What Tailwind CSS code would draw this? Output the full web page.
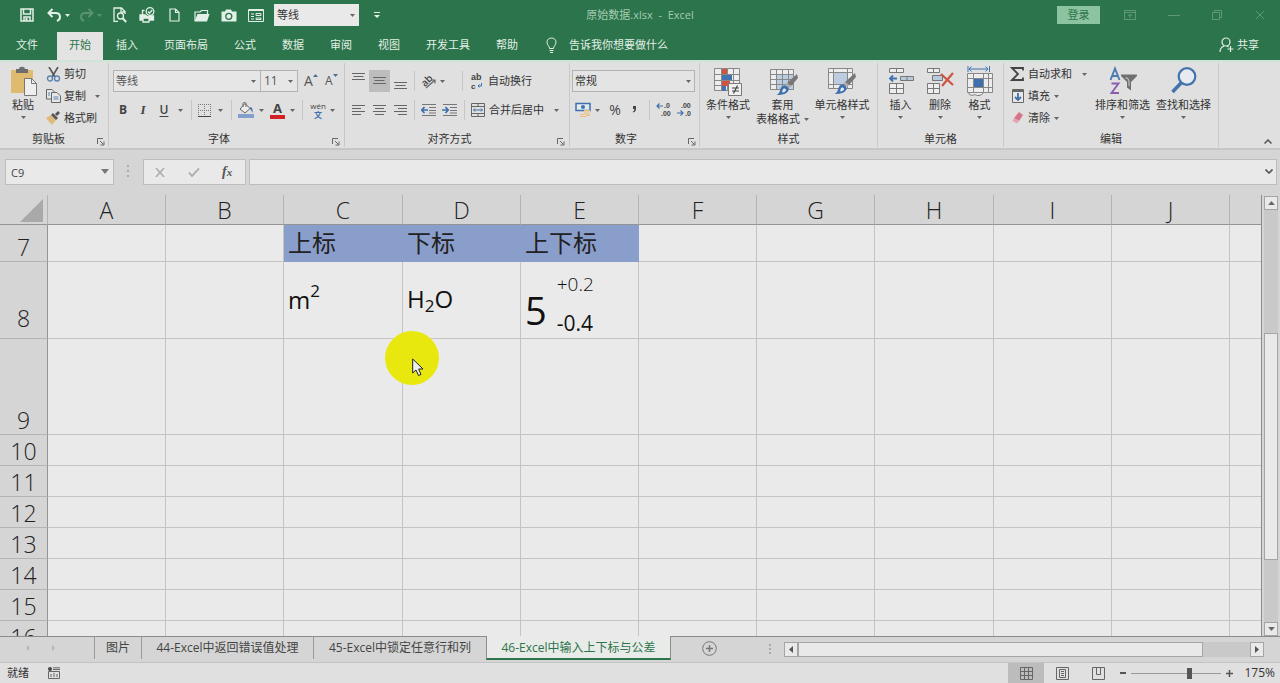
<!DOCTYPE html>
<html lang="zh-CN">
<head>
<meta charset="utf-8">
<meta name="viewport" content="width=device-width, initial-scale=1">
<title>原始数据.xlsx - Excel</title>
<script src="https://cdn.jsdelivr.net/npm/@tailwindcss/browser@4"></script>
</head>
<body class="h-screen overflow-hidden flex flex-col bg-[#d5d5d5] text-[#333] text-[11px] leading-[14px] font-['Open_Sans','Noto_Sans_CJK_SC',sans-serif]">

<!-- Shared symbols -->
<svg class="hidden" aria-hidden="true">
  <symbol id="caret" viewBox="0 0 5 3"><path d="M0 0h5L2.500 3z" fill="currentColor"/></symbol>
  <symbol id="launch" viewBox="0 0 8 8"><path d="M.5 6V.5H6M3 3l3.500 3.500M7 3.500V7H3.500" fill="none" stroke="#666"/></symbol>
  <symbol id="brush" viewBox="0 0 22 22"><path d="M21 0l1 4-7 8-4-3z" fill="#777"/><path d="M11 9l4 3-2 2-4-3z" fill="#aaa"/><path d="M8.500 11.500c2 0 4.500 2 4 4.500-.5 3-5 5-12 5 3-1.500 3-3 4-6 .6-2 2-3.500 4-3.500z" fill="#3e70ad"/><path d="M7 15c1-1 3-.5 3 1s-2 2.500-4 2.500z" fill="#e4ebf3"/></symbol>
</svg>

<!-- Title bar -->
<header class="shrink-0 bg-[#2c744b] text-[#e3f0e7]">
  <div class="h-[30px] grid grid-cols-[1fr_auto_1fr] items-center">
    <div class="flex items-center pl-5">
      <button aria-label="保存" class="w-[14px]"><svg class="w-[14px] h-[14px]" viewBox="0 0 14 14" fill="none" stroke="currentColor" stroke-width="1.500"><path d="M1 1h12v12H1zM3.500 1v5h7V1M4 13V9h6v4"/><path d="M5.500 10h2v3h-2z" fill="currentColor" stroke="none"/></svg></button>
      <button aria-label="撤消" class="ml-[13px] w-[15px]"><svg class="w-[15px] h-[14px]" viewBox="0 0 15 14" fill="none" stroke="currentColor" stroke-width="2"><path d="M5.500 1L1.500 5l4 4M2 5h6.500c3 0 4.500 1.500 4.500 4 0 2-1.200 3.300-3 4"/></svg></button>
      <svg class="ml-[3px] w-[5px] h-[3px]"><use href="#caret"/></svg>
      <button aria-label="恢复" disabled class="ml-[9px] w-[15px] opacity-25"><svg class="w-[15px] h-[14px]" viewBox="0 0 15 14" fill="none" stroke="currentColor" stroke-width="2"><path d="M9.500 1l4 4-4 4M13 5H6.500C3.500 5 2 6.500 2 9c0 2 1.200 3.300 3 4"/></svg></button>
      <svg class="ml-[3px] w-[5px] h-[3px] opacity-25"><use href="#caret"/></svg>
      <button aria-label="打印预览" class="ml-[11px] w-[14px]"><svg class="w-[14px] h-[16px]" viewBox="0 0 14 16" fill="none" stroke="currentColor" stroke-width="1.300"><path d="M5 14.300H1V1h7.500L12 4.500V7M8 1v4h4"/><circle cx="7.500" cy="9" r="3"/><path d="M9.700 11.300l3.500 3.700" stroke-width="2"/></svg></button>
      <button aria-label="快速打印" class="ml-3 w-4"><svg class="w-4 h-[16px]" viewBox="0 0 16 16" fill="none" stroke="currentColor" stroke-width="1.300"><path d="M5.500 3.500H3.500V8"/><path d="M1 8h5l3 2 4-1h1.500v4H1z" fill="currentColor"/><path d="M4 11h6v4H4z" fill="#2c744b"/><circle cx="11" cy="4.500" r="3.800"/><path d="M9 4.500l1.500 1.700L13.200 3"/></svg></button>
      <button aria-label="新建" class="ml-[14px] w-[11px]"><svg class="w-[11px] h-[14px]" viewBox="0 0 11 14" fill="none" stroke="currentColor" stroke-width="1.200"><path d="M1 1h5.500L10 4.500V13H1zM6.500 1v3.500H10"/></svg></button>
      <button aria-label="打开" class="ml-[14px] w-4"><svg class="w-4 h-[13px]" viewBox="0 0 16 13"><path d="M1 12V3h5l1.500-1.500h6V5" fill="none" stroke="currentColor" stroke-width="1.200"/><path d="M3.500 5H15.500L13 12.500H.5z" fill="currentColor"/></svg></button>
      <button aria-label="照相机" class="ml-[11px] w-4"><svg class="w-4 h-[13px]" viewBox="0 0 16 13"><path d="M.5 2.500H4L5 .5h5l1 2h4.500v10H.5z" fill="currentColor"/><circle cx="7.800" cy="7.300" r="3" fill="none" stroke="#2c744b" stroke-width="1.300"/></svg></button>
      <button aria-label="窗体" class="ml-[11px] w-4"><svg class="w-4 h-[13px]" viewBox="0 0 16 13" fill="none" stroke="currentColor"><path d="M.5.5h15v12H.5zM.5 1.500h15M3 5h3M3 7.500h3M3 10h3"/><path d="M8 4.500h5v2H8zM8 9h5v1.500H8z"/></svg></button>
      <div class="relative ml-[10px] w-[85px]">
        <select aria-label="快速字体" class="block appearance-none w-full h-[22px] bg-[#e9e9e9] text-[#333] pl-[3px]"><option>等线</option></select>
        <svg class="absolute right-1 top-[10px] w-[5px] h-[3px] text-[#666] pointer-events-none"><use href="#caret"/></svg>
      </div>
      <button aria-label="自定义快速访问工具栏" class="ml-[15px]"><svg class="w-[6px] h-[7px]" viewBox="0 0 6 7" fill="currentColor"><path d="M0 0h6v1H0zM0 3h6L3 6z"/></svg></button>
    </div>
    <h1 class="text-[#a5ccb3]">原始数据.xlsx&nbsp; -&nbsp; Excel</h1>
    <div class="flex items-center justify-end pr-[15px] text-[#5f9877]">
      <button class="w-[43px] h-[18px] bg-[#8cc3a0] text-[#2c744b]">登录</button>
      <button aria-label="功能区显示选项" class="ml-6"><svg class="w-3 h-[10px]" viewBox="0 0 12 10" fill="none" stroke="currentColor"><path d="M.5.5h11v9H.5zM.5 2.500h11M6 8V4M4 6l2-2 2 2"/></svg></button>
      <button aria-label="最小化" class="ml-[32px]"><svg class="w-3 h-[10px]" viewBox="0 0 12 10" stroke="currentColor"><path d="M0 5.500h12"/></svg></button>
      <button aria-label="还原" class="ml-[32px]"><svg class="w-[10px] h-[10px]" viewBox="0 0 10 10" fill="none" stroke="currentColor"><path d="M.5 2.500h7v7h-7zM2.500 2.500v-2h7v7h-2"/></svg></button>
      <button aria-label="关闭" class="ml-[33px]"><svg class="w-[10px] h-[10px]" viewBox="0 0 10 10" stroke="currentColor"><path d="M1 1l8 8M9 1L1 9"/></svg></button>
    </div>
  </div>
  <nav class="h-[30px] flex items-end">
    <button class="w-[57px] h-7 pr-[3px] pb-[3px]">文件</button>
    <button class="w-[46px] h-7 pb-[3px] bg-[#e3e3e3] text-[#2c744b]">开始</button>
    <button class="px-[13px] h-7 pb-[3px]">插入</button>
    <button class="px-[13px] h-7 pb-[3px]">页面布局</button>
    <button class="px-[13px] h-7 pb-[3px]">公式</button>
    <button class="px-[13px] h-7 pb-[3px]">数据</button>
    <button class="px-[13px] h-7 pb-[3px]">审阅</button>
    <button class="px-[13px] h-7 pb-[3px]">视图</button>
    <button class="px-[13px] h-7 pb-[3px]">开发工具</button>
    <button class="px-[13px] h-7 pb-[3px]">帮助</button>
    <button class="ml-[15px] h-7 pb-[3px] flex items-center gap-3"><svg class="w-[11px] h-[16px]" viewBox="0 0 11 16" fill="none" stroke="currentColor"><path d="M3.500 11.500c0-2.500-2.500-3.500-2.500-6.200C1 2.600 3 1 5.500 1S10 2.600 10 5.300c0 2.700-2.500 3.700-2.500 6.200zM3.500 13.500h4M4 15.500h3"/></svg>告诉我你想要做什么</button>
    <button class="ml-auto mr-[21px] h-7 pb-[3px] flex items-center gap-[3px]"><svg class="w-[15px] h-4" viewBox="0 0 15 16" fill="none" stroke="currentColor" stroke-width="1.200"><circle cx="7" cy="5" r="4"/><path d="M1 15c0-3 1.500-5 4-6M8 8.800l1.500 1.200M11.500 9v6M8.500 12h6"/></svg>共享</button>
  </nav>
</header>

<!-- Ribbon -->
<section aria-label="功能区" class="shrink-0 flex h-[90px] bg-[#e0e0e0] border-t-2 border-t-[#cfe3d7] border-b-2 border-b-[#c6c6c6]">

  <div class="w-[109px] flex flex-col border-r border-[#c8c8c8] my-px">
    <div class="flex h-[67px]">
      <button class="w-[46px] pt-[3px] flex flex-col items-center">
        <svg class="w-7 h-8" viewBox="0 0 28 32"><path d="M2 4h22v23H2z" fill="#dfbb6f"/><path d="M7 7V3h3c0-3 6-3 6 0h3v4z" fill="#6d6d6d"/><path d="M15.500 12.500h7l5 5v12h-12z" fill="#eee" stroke="#777"/><path d="M22.500 12.500v5h5" fill="none" stroke="#777"/></svg>
        粘贴
        <svg class="mt-1 w-[5px] h-[3px] text-[#666]"><use href="#caret"/></svg>
      </button>
      <div class="flex flex-col">
        <button class="h-[22px] flex items-center gap-[3px]"><svg class="w-[15px] h-[15px]" viewBox="0 0 15 15" fill="none"><path d="M3 0l6 10M12 0L6 10" stroke="#555" stroke-width="1.600"/><circle cx="4" cy="11.500" r="2.500" stroke="#5d86b5" stroke-width="1.400"/><circle cx="11" cy="11.500" r="2.500" stroke="#5d86b5" stroke-width="1.400"/></svg>剪切</button>
        <button class="h-[22px] flex items-center gap-[3px]"><svg class="w-[15px] h-[14px]" viewBox="0 0 15 14" fill="#e6e6e6" stroke="#666"><path d="M.5.5H6L8.500 3v7H.5z"/><path d="M5.500 3.500H11L14.500 7v6.500h-9z"/><path d="M2 4h2M2 6h2M7.500 8h5M7.500 10h5" stroke="#5d86b5"/></svg>复制<svg class="ml-[6px] w-[5px] h-[3px] text-[#666]"><use href="#caret"/></svg></button>
        <button class="h-[22px] flex items-center gap-[3px]"><svg class="w-[15px] h-[14px]" viewBox="0 0 15 14"><path d="M0 7l5-3 5 5-4 5z" fill="#dfbb7a"/><path d="M5 4l2-2 5 5-2 2z" fill="#555"/><path d="M9 3l3-3 2 2-3 3z" fill="#555"/></svg>格式刷</button>
      </div>
    </div>
    <div class="flex items-center h-[17px] pr-[3px]"><span class="flex-1 text-center">剪贴板</span><button aria-label="剪贴板设置" class="self-end"><svg class="w-2 h-2 mb-px"><use href="#launch"/></svg></button></div>
  </div>

  <div class="w-[236px] flex flex-col border-r border-[#c8c8c8] my-px">
    <div class="h-[67px] pt-[7px] pl-1 flex flex-col gap-[7px]">
      <div class="flex h-[22px]">
        <div class="relative w-[148px]"><select aria-label="字体" class="appearance-none w-full h-full pl-[2px] bg-[#e6e6e6] border border-[#b2b2b2] text-[#555]"><option>等线</option></select><svg class="absolute right-[5px] top-[10px] w-[5px] h-[3px] text-[#666] pointer-events-none"><use href="#caret"/></svg></div>
        <div class="relative w-[38px] -ml-px"><select aria-label="字号" class="appearance-none w-full h-full pl-[3px] bg-[#e6e6e6] border border-[#b2b2b2] text-[#555] text-[12px]"><option>11</option></select><svg class="absolute right-[5px] top-[10px] w-[5px] h-[3px] text-[#666] pointer-events-none"><use href="#caret"/></svg></div>
        <button aria-label="增大字号" class="ml-[6px] w-[15px] flex items-center text-[14px] text-[#555]">A<svg class="w-[5px] h-[3px] mb-3 rotate-180 text-[#4a6d96]"><use href="#caret"/></svg></button>
        <button aria-label="减小字号" class="ml-[6px] w-[15px] flex items-center text-[12px] text-[#555]">A<svg class="w-[5px] h-[3px] mb-3 text-[#4a6d96]"><use href="#caret"/></svg></button>
      </div>
      <div class="flex items-center h-[22px] text-[12px] text-[#444]">
        <button class="w-5 font-bold">B</button>
        <button class="w-5 italic font-bold font-['Liberation_Serif',serif] text-[13px]">I</button>
        <button class="w-[22px] font-semibold underline underline-offset-2">U</button>
        <svg class="ml-[3px] w-[5px] h-[3px] text-[#666]"><use href="#caret"/></svg>
        <span class="ml-2 w-px h-5 bg-[#c6c6c6]"></span>
        <button aria-label="边框" class="ml-[6px]"><svg class="w-[13px] h-[13px]" viewBox="0 0 13 13" fill="none" stroke="#777" stroke-dasharray="1 1"><path d="M.5 0v13M6.500 0v13M12.500 0v13M0 .5h13M0 6.500h13"/><path d="M0 12.500h13" stroke="#444" stroke-dasharray="none"/></svg></button>
        <svg class="ml-[7px] w-[5px] h-[3px] text-[#666]"><use href="#caret"/></svg>
        <span class="ml-2 w-px h-5 bg-[#c6c6c6]"></span>
        <button aria-label="填充颜色" class="ml-[6px]"><svg class="w-4 h-4" viewBox="0 0 16 16"><path d="M0 12h16v4H0z" fill="#849fce"/><path d="M7 1.500l5 5L7 11 2 7z" fill="#ececec" stroke="#666"/><path d="M5 5V1.500C5 0 8 0 8 1.500V5" fill="none" stroke="#666"/><path d="M12 5c2 0 3 2 2.500 6-1-2-1-3-2.500-4z" fill="#3e70ad"/></svg></button>
        <svg class="ml-[5px] w-[5px] h-[3px] text-[#666]"><use href="#caret"/></svg>
        <button aria-label="字体颜色" class="ml-[6px] w-[15px] h-[17px] border-b-[4px] border-[#d31f26] font-bold text-[13px] leading-[13px]">A</button>
        <svg class="ml-[5px] w-[5px] h-[3px] text-[#666]"><use href="#caret"/></svg>
        <span class="ml-[7px] w-px h-5 bg-[#c6c6c6]"></span>
        <button aria-label="拼音指南" class="ml-[7px] w-4 flex flex-col items-center"><span class="text-[8px] leading-[8px]">wén</span><span class="text-[8px] leading-[9px] font-bold text-[#3e70ad]">文</span></button>
        <svg class="ml-1 w-[5px] h-[3px] text-[#666]"><use href="#caret"/></svg>
      </div>
    </div>
    <div class="flex items-center h-[17px] pr-1"><span class="flex-1 text-center pr-[3px]">字体</span><button aria-label="字体设置" class="self-end"><svg class="w-2 h-2 mb-px"><use href="#launch"/></svg></button></div>
  </div>

  <div class="w-[225px] flex flex-col border-r border-[#c8c8c8] my-px">
    <div class="h-[67px] pt-[7px] pl-[3px] flex flex-col gap-[7px]">
      <div class="flex items-center h-[22px]">
        <button aria-label="顶端对齐" class="w-[21px] h-full flex justify-center pt-[3px]"><svg class="w-[13px] h-[8px]" stroke="#666"><path d="M0 .5h13M1.500 3.500h10M0 6.500h13"/></svg></button>
        <button aria-label="垂直居中" class="w-[21px] h-full flex justify-center items-center bg-[#bdbdbd]"><svg class="w-[13px] h-[8px]" stroke="#666"><path d="M0 .5h13M1.500 3.500h10M0 6.500h13"/></svg></button>
        <button aria-label="底端对齐" class="w-[21px] h-full flex justify-center items-end pb-[2px]"><svg class="w-[13px] h-[8px]" stroke="#666"><path d="M0 .5h13M1.500 3.500h10M0 6.500h13"/></svg></button>
        <span class="ml-[3px] w-px h-5 bg-[#c6c6c6]"></span>
        <button aria-label="方向" class="ml-[6px]"><svg class="w-4 h-4 overflow-visible" viewBox="0 0 16 16"><text x="0" y="11" transform="rotate(-45 6 8)" font-size="10" font-weight="600" fill="#444">ab</text><path d="M5 15l9-8M10.500 7H14v3.500" fill="none" stroke="#666" stroke-width="1.200"/></svg></button>
        <svg class="ml-[3px] w-[5px] h-[3px] text-[#666]"><use href="#caret"/></svg>
        <span class="ml-[17px] w-px h-5 bg-[#c6c6c6]"></span>
        <button class="ml-[7px] flex items-center gap-1"><svg class="w-[14px] h-4 overflow-visible" viewBox="0 0 14 16" font-family="Liberation Sans" font-size="9" font-weight="700" fill="#444"><text x="1" y="7">ab</text><text x="1" y="16" font-size="8">c</text><path d="M11.500 10v3H8M9.500 11.500L8 13l1.500 1.500" fill="none" stroke="#3e70ad"/></svg>自动换行</button>
      </div>
      <div class="flex items-center h-[22px]">
        <button aria-label="左对齐" class="w-[21px] flex justify-center"><svg class="w-[13px] h-[10px]" stroke="#666"><path d="M0 .5h13M0 3.500h9M0 6.500h13M0 9.500h9"/></svg></button>
        <button aria-label="居中" class="w-[21px] flex justify-center"><svg class="w-[13px] h-[10px]" stroke="#666"><path d="M0 .5h13M2 3.500h9M0 6.500h13M2 9.500h9"/></svg></button>
        <button aria-label="右对齐" class="w-[21px] flex justify-center"><svg class="w-[13px] h-[10px]" stroke="#666"><path d="M0 .5h13M4 3.500h9M0 6.500h13M4 9.500h9"/></svg></button>
        <span class="ml-[3px] w-px h-5 bg-[#c6c6c6]"></span>
        <button aria-label="减少缩进量" class="ml-[6px]"><svg class="w-[15px] h-3" viewBox="0 0 15 12"><path d="M1 .5h14M8 3.500h7M8 6.500h7M8 9h7M1 11.500h14" stroke="#777"/><path d="M7 6H1M3.500 3L.8 6l2.700 3" stroke="#3e70ad" stroke-width="1.700" fill="none"/></svg></button>
        <button aria-label="增加缩进量" class="ml-[6px]"><svg class="w-[15px] h-3" viewBox="0 0 15 12"><path d="M1 .5h14M8 3.500h7M8 6.500h7M8 9h7M1 11.500h14" stroke="#777"/><path d="M0 6h6M3.500 3l2.700 3-2.700 3" stroke="#3e70ad" stroke-width="1.700" fill="none"/></svg></button>
        <span class="ml-[7px] w-px h-5 bg-[#c6c6c6]"></span>
        <button class="ml-[6px] flex items-center gap-1"><svg class="w-[14px] h-[14px]" viewBox="0 0 14 14" fill="none" stroke="#666"><path d="M.5.5h13v13H.5zM.5 3.500h13M.5 10.500h13M7 .5v3M7 10.500v3"/><path d="M2.500 7h9M4 5.500L2.500 7 4 8.500M10 5.500L11.500 7 10 8.500" stroke="#3e70ad"/></svg>合并后居中<svg class="ml-[6px] w-[5px] h-[3px] text-[#666]"><use href="#caret"/></svg></button>
      </div>
    </div>
    <div class="flex items-center h-[17px] pr-1"><span class="flex-1 text-center pr-[3px]">对齐方式</span><button aria-label="对齐设置" class="self-end"><svg class="w-2 h-2 mb-px"><use href="#launch"/></svg></button></div>
  </div>

  <div class="w-[130px] flex flex-col border-r border-[#c8c8c8] my-px">
    <div class="h-[67px] pt-[7px] pl-[2px] flex flex-col gap-[7px]">
      <div class="relative w-[123px] h-[22px]"><select aria-label="数字格式" class="appearance-none w-full h-full pl-[2px] bg-[#e4e4e4] border border-[#b2b2b2]"><option>常规</option></select><svg class="absolute right-1 top-[10px] w-[5px] h-[3px] text-[#666] pointer-events-none"><use href="#caret"/></svg></div>
      <div class="flex items-center h-[22px] text-[#444]">
        <button aria-label="会计数字格式" class="ml-[3px]"><svg class="w-4 h-4" viewBox="0 0 16 16"><path d="M1 1.500h14v7H1z" fill="#e3eaf2" stroke="#3e70ad" stroke-width="1.500"/><circle cx="8" cy="5" r="2" fill="#3e70ad"/><path d="M9 8h6v6H9zM5 12h6v3H5z" fill="#e5bd83"/><path d="M9 10h6M9 12h6M5 13.500h6" stroke="#e9e1d4"/></svg></button>
        <svg class="ml-1 w-[5px] h-[3px] text-[#666]"><use href="#caret"/></svg>
        <button class="ml-2 w-[14px] text-[14px]">%</button>
        <button aria-label="千位分隔样式" class="ml-[9px] w-2"><svg class="w-2 h-2" viewBox="0 0 8 8"><path d="M2 0h3v3c0 2-1 3-3 3.500V5.500C3 5 3.300 4.500 3.300 3H2z" fill="#444"/></svg></button>
        <span class="ml-[10px] w-px h-5 bg-[#c6c6c6]"></span>
        <button aria-label="增加小数位数" class="ml-[6px]"><svg class="w-4 h-4 overflow-visible" viewBox="0 0 16 16" font-family="Liberation Sans" font-size="7" font-weight="700" fill="#444"><text x="8" y="6">.0</text><text x="5" y="14">.00</text><path d="M7 4H1M3.500 1.500L1 4l2.500 2.500" fill="none" stroke="#3e70ad" stroke-width="1.200"/></svg></button>
        <button aria-label="减少小数位数" class="ml-[5px]"><svg class="w-4 h-4 overflow-visible" viewBox="0 0 16 16" font-family="Liberation Sans" font-size="7" font-weight="700" fill="#444"><text x="4" y="6">.00</text><text x="8" y="14">.0</text><path d="M0 11h6M3.500 8.500L6 11l-2.500 2.500" fill="none" stroke="#3e70ad" stroke-width="1.200"/></svg></button>
      </div>
    </div>
    <div class="flex items-center h-[17px] pr-[3px]"><span class="flex-1 text-center pr-[6px]">数字</span><button aria-label="数字设置" class="self-end"><svg class="w-2 h-2 mb-px"><use href="#launch"/></svg></button></div>
  </div>

  <div class="w-[178px] flex flex-col border-r border-[#c8c8c8] my-px">
    <div class="h-[67px] pt-[3px] pl-px flex items-start">
      <button class="w-[54px] flex flex-col items-center">
        <svg class="w-[30px] h-8" viewBox="0 0 30 32"><path d="M1.500 2.500h25v22h-25zM1.500 8.500h25M1.500 14.500h25M1.500 19.500h25M8.500 2.500v22M14.500 2.500v22M20.500 2.500v22" fill="#ededed" stroke="#888"/><path d="M9 3h5v5H9zM9 15h8v5H9z" fill="#cf5340"/><path d="M9 9h10v5H9zM9 20h4v5H9z" fill="#4273ae"/><path d="M15.500 17.500h13v12h-13z" fill="#f0f0f0" stroke="#777"/><path d="M19 22h7M19 25h7M24.500 19.500l-4 8" stroke="#444" stroke-width="1.200"/></svg>
        条件格式
        <svg class="mt-1 w-[5px] h-[3px] text-[#666]"><use href="#caret"/></svg>
      </button>
      <button class="w-[55px] flex flex-col items-center">
        <svg class="w-[30px] h-8" viewBox="0 0 30 32"><path d="M2.500 3.500h23v20h-23z" fill="#ededed"/><path d="M8 9h18v15H8z" fill="#bccde2"/><path d="M2.500 3.500h23v20h-23zM2.500 8.500h23M2.500 13.500h23M2.500 18.500h23M8.500 3.500v20M14.500 3.500v20M20.500 3.500v20" fill="none" stroke="#888"/><use href="#brush" x="8" y="8" width="22" height="22"/></svg>
        套用
        <span class="flex items-center gap-1">表格格式<svg class="w-[5px] h-[3px] text-[#666]"><use href="#caret"/></svg></span>
      </button>
      <button class="w-[64px] flex flex-col items-center">
        <svg class="w-[30px] h-8" viewBox="0 0 30 32"><path d="M1.500 2.500h24v20h-24z" fill="#ededed"/><path d="M7 7h14v11H7z" fill="#bccde2"/><path d="M1.500 2.500h24v20h-24zM1.500 6.500h24M1.500 18.500h24M6.500 2.500v20M20.500 2.500v20" fill="none" stroke="#888"/><use href="#brush" x="7" y="7" width="22" height="22"/></svg>
        单元格样式
        <svg class="mt-1 w-[5px] h-[3px] text-[#666]"><use href="#caret"/></svg>
      </button>
    </div>
    <div class="h-[17px] pt-[2px] text-center">样式</div>
  </div>

  <div class="w-[126px] flex flex-col border-r border-[#c8c8c8] my-px">
    <div class="h-[67px] pt-[3px] pl-[3px] flex items-start">
      <button class="w-[39px] flex flex-col items-center">
        <svg class="w-[26px] h-8" viewBox="0 0 26 32" fill="#eee" stroke="#777"><path d="M1.500 2.500h14v4h-14zM8.500 2.500v4M1.500 17.500h14v10h-14zM1.500 22.500h14M8.500 17.500v10"/><path d="M12.500 10.500h13v4h-13zM19 10.500v4" fill="#b9c9dc"/><path d="M9 12.500H2M5 9.500l-3 3 3 3" fill="none" stroke="#3e70ad" stroke-width="1.800"/></svg>
        插入
        <svg class="mt-1 w-[5px] h-[3px] text-[#666]"><use href="#caret"/></svg>
      </button>
      <button class="w-[40px] flex flex-col items-center">
        <svg class="w-7 h-8" viewBox="0 0 28 32" fill="#eee" stroke="#777"><path d="M1.500 2.500h12v4h-12zM7.500 2.500v4M1.500 17.500h12v10h-12zM1.500 22.500h12M7.500 17.500v10"/><path d="M6.500 9.500h10v5h-10z" fill="#b9c9dc"/><path d="M15 8l12 11M27 7L16 20" fill="none" stroke="#cf5340" stroke-width="2.200"/></svg>
        删除
        <svg class="mt-1 w-[5px] h-[3px] text-[#666]"><use href="#caret"/></svg>
      </button>
      <button class="w-[39px] flex flex-col items-center">
        <svg class="w-7 h-8" viewBox="0 0 28 32" fill="none"><path d="M3 3h19M5.500 .5L3 3 5.500 5.500M19.500 .5L22 3 19.500 5.500M2 0v6M23.500 0v6" stroke="#3e70ad"/><path d="M1.500 7.500h25v19h-25z" fill="#ededed" stroke="#888"/><path d="M7.500 7.500v19M17.500 7.500v19M1.500 12.500h25M1.500 21.500h25M22.500 7.500v19" stroke="#888"/><path d="M8 13h9v8H8z" fill="#3e70ad"/><path d="M3 27c0 3 4 2.500 6 1.500 2 1.500 6 1.500 8-1.500" fill="#ededed" stroke="#777"/></svg>
        格式
        <svg class="mt-1 w-[5px] h-[3px] text-[#666]"><use href="#caret"/></svg>
      </button>
    </div>
    <div class="h-[17px] pt-[2px] text-center">单元格</div>
  </div>

  <div class="w-[215px] flex flex-col border-r border-[#c8c8c8] my-px">
    <div class="h-[67px] flex pl-[6px]">
      <div class="w-[82px] flex flex-col">
        <button class="h-[22px] flex items-center gap-[3px]"><svg class="w-[15px] h-[14px]" viewBox="0 0 15 14" fill="none" stroke="#444" stroke-width="1.800"><path d="M13 3.500V1H2l6 6-6 6h11v-2.500"/></svg>自动求和<svg class="ml-[7px] w-[5px] h-[3px] text-[#666]"><use href="#caret"/></svg></button>
        <button class="h-[22px] flex items-center gap-[3px]"><svg class="w-[15px] h-[14px]" viewBox="0 0 15 14" fill="none"><path d="M2.500.5h11v13h-11z" fill="#e8e8e8" stroke="#666"/><path d="M2 2h12" stroke="#666" stroke-width="2"/><path d="M8 4v7M5 8l3 3 3-3" stroke="#3e70ad" stroke-width="1.800"/></svg>填充<svg class="ml-px w-[5px] h-[3px] text-[#666]"><use href="#caret"/></svg></button>
        <button class="h-[22px] flex items-center gap-[3px]"><svg class="w-[15px] h-[14px]" viewBox="0 0 15 14"><path d="M9 1l4 3-4 6-5-3z" fill="#d7748a"/><path d="M4 7l5 3-2 2.500L2.500 10z" fill="#e2a5b1"/></svg>清除<svg class="ml-px w-[5px] h-[3px] text-[#666]"><use href="#caret"/></svg></button>
      </div>
      <button class="w-[61px] pt-[3px] flex flex-col items-center">
        <svg class="w-[28px] h-8" viewBox="0 0 28 32"><path d="M1.500 14L6 2.500 10.500 14M3 10h6" fill="none" stroke="#4a7ab0" stroke-width="1.900"/><path d="M2.500 17.500h7L2.500 27H10" fill="none" stroke="#8a5db0" stroke-width="1.900"/><path d="M12 8.500h16v1.500l-6 6v8.500l-4-3V16l-6-6z" fill="#707070"/><path d="M16.500 12h2l1.500 3v5" fill="none" stroke="#ccc"/></svg>
        排序和筛选
        <svg class="mt-1 w-[5px] h-[3px] text-[#666]"><use href="#caret"/></svg>
      </button>
      <button class="w-[61px] pt-[3px] flex flex-col items-center">
        <svg class="w-[28px] h-8" viewBox="0 0 28 32" fill="none" stroke="#4273ae"><circle cx="17" cy="10.500" r="8.300" fill="#e6ebf1" stroke-width="2.200"/><path d="M11 17L2.500 26" stroke-width="3.500"/></svg>
        查找和选择
        <svg class="mt-1 w-[5px] h-[3px] text-[#666]"><use href="#caret"/></svg>
      </button>
    </div>
    <div class="h-[17px] pt-[2px] text-center">编辑</div>
  </div>
  <button aria-label="折叠功能区" class="ml-auto mr-2 mb-1 self-end"><svg class="w-2 h-[5px]" viewBox="0 0 8 5" fill="none" stroke="#555" stroke-width="1.500"><path d="M.5 4.500L4 1l3.500 3.500"/></svg></button>
</section>

<!-- Formula bar -->
<section aria-label="编辑栏" class="shrink-0 h-[45px] flex items-start pt-[9px] pl-[5px] pr-[3px]">
  <div class="relative w-[109px] h-[26px]">
    <input aria-label="名称框" value="C9" class="w-full h-full bg-[#e9e9e9] border border-[#bdbdbd] pl-[5px] text-[11px] text-[#444]">
    <svg class="absolute right-[5px] top-[10px] w-[8px] h-[5px] text-[#777]"><use href="#caret"/></svg>
  </div>
  <svg class="ml-[13px] mt-[6px] w-[3px] h-[13px]" viewBox="0 0 3 13" fill="#aaa"><path d="M0 0h2v2H0zM0 5h2v2H0zM0 10h2v2H0z"/></svg>
  <div class="ml-[13px] w-[103px] h-[26px] flex items-center bg-[#e9e9e9] border border-[#bdbdbd]">
    <button aria-label="取消" class="ml-[11px]"><svg class="w-[10px] h-[9px]" viewBox="0 0 10 9" stroke="#aaa" stroke-width="1.500"><path d="M1 0l8 9M9 0L1 9"/></svg></button>
    <button aria-label="输入" class="ml-[23px]"><svg class="w-3 h-[9px]" viewBox="0 0 12 9" fill="none" stroke="#aaa" stroke-width="1.800"><path d="M1 4.500l3 3.500 7-7.500"/></svg></button>
    <button aria-label="插入函数" class="ml-[22px] font-['Liberation_Serif',serif] italic font-bold text-[14px] text-[#555]">f<span class="text-[11px]">x</span></button>
  </div>
  <div class="relative ml-[3px] flex-1 h-[26px]">
    <input aria-label="编辑栏" class="w-full h-full bg-[#e9e9e9] border border-[#bdbdbd] px-2">
    <svg class="absolute right-1 top-[10px] w-2 h-[5px]" viewBox="0 0 8 5" fill="none" stroke="#555" stroke-width="1.600"><path d="M.5.5L4 4 7.500.5"/></svg>
  </div>
</section>

<!-- Worksheet -->
<main class="relative flex-1 min-h-0 flex">
  <div class="flex-1 min-w-0 overflow-hidden border-r border-[#8c8c8c]">
    <table class="w-full table-fixed border-separate border-spacing-0 text-[24px] leading-[24px] text-[#222] [&_th]:font-[350] [&_th]:text-[23px] [&_th]:p-0 [&_td]:p-0 [&_thead_th]:border-r [&_thead_th]:border-b [&_thead_th]:border-r-[#b4b4b4] [&_thead_th]:border-b-[#949494] [&_tbody_th]:bg-[#d5d5d5] [&_tbody_th]:border-r [&_tbody_th]:border-b [&_tbody_th]:border-r-[#949494] [&_tbody_th]:border-b-[#b4b4b4] [&_tbody_th]:align-bottom [&_tbody_th]:pb-[2px] [&_td]:bg-[#eaeaea] [&_td]:border-r [&_td]:border-b [&_td]:border-[#c4c4c4] [&_tr>*:last-child]:border-r-0">
      <colgroup><col class="w-[48px]"><col class="w-[118px]"><col class="w-[118px]"><col class="w-[119px]"><col class="w-[118px]"><col class="w-[118px]"><col class="w-[118px]"><col class="w-[118px]"><col class="w-[119px]"><col class="w-[118px]"><col class="w-[118px]"><col></colgroup>
      <thead><tr class="h-[30px]"><th><svg class="ml-auto mr-1 mt-[2px] w-[23px] h-[23px]" viewBox="0 0 23 23"><path d="M23 0v23H0z" fill="#a9a9a9"/></svg></th><th scope="col">A</th><th scope="col">B</th><th scope="col">C</th><th scope="col">D</th><th scope="col">E</th><th scope="col">F</th><th scope="col">G</th><th scope="col">H</th><th scope="col">I</th><th scope="col">J</th><th></th></tr></thead>
      <tbody>
        <tr class="h-[37px]"><th scope="row">7</th><td></td><td></td>
          <td class="!bg-[#8a9ecb] !border-[#8a9ecb]"><div class="pl-1">上标</div></td><td class="!bg-[#8a9ecb] !border-[#8a9ecb]"><div class="pl-1">下标</div></td><td class="!bg-[#8a9ecb] !border-[#8a9ecb]"><div class="pl-1">上下标</div></td>
          <td></td><td></td><td></td><td></td><td></td><td></td></tr>
        <tr class="h-[77px]"><th scope="row"><div class="pb-[6px]">8</div></th><td></td><td></td>
          <td class="text-[#111]"><div class="pl-1">m<sup class="text-[17px] -top-3">2</sup></div></td>
          <td class="text-[#111]"><div class="pl-1 pb-[2px]">H<sub class="text-[17px]">2</sub>O</div></td>
          <td class="text-[#111]"><div class="pl-1 flex items-center"><span class="text-[38px] font-medium pt-5">5</span><span class="ml-[10px] pt-[6px] flex flex-col gap-[15px]"><span class="text-[19px] font-[350]">+0.2</span><span class="text-[21px]">-0.4</span></span></div></td>
          <td></td><td></td><td></td><td></td><td></td><td></td></tr>
        <tr class="h-[96px]"><th scope="row">9</th><td></td><td></td><td></td><td></td><td></td><td></td><td></td><td></td><td></td><td></td><td></td></tr>
        <tr class="h-[31px]"><th scope="row">10</th><td></td><td></td><td></td><td></td><td></td><td></td><td></td><td></td><td></td><td></td><td></td></tr>
        <tr class="h-[31px]"><th scope="row">11</th><td></td><td></td><td></td><td></td><td></td><td></td><td></td><td></td><td></td><td></td><td></td></tr>
        <tr class="h-[31px]"><th scope="row">12</th><td></td><td></td><td></td><td></td><td></td><td></td><td></td><td></td><td></td><td></td><td></td></tr>
        <tr class="h-[31px]"><th scope="row">13</th><td></td><td></td><td></td><td></td><td></td><td></td><td></td><td></td><td></td><td></td><td></td></tr>
        <tr class="h-[31px]"><th scope="row">14</th><td></td><td></td><td></td><td></td><td></td><td></td><td></td><td></td><td></td><td></td><td></td></tr>
        <tr class="h-[31px]"><th scope="row">15</th><td></td><td></td><td></td><td></td><td></td><td></td><td></td><td></td><td></td><td></td><td></td></tr>
        <tr class="h-[31px]"><th scope="row">16</th><td></td><td></td><td></td><td></td><td></td><td></td><td></td><td></td><td></td><td></td><td></td></tr>
      </tbody>
    </table>
  </div>
  <!-- Vertical scroll bar -->
  <div class="w-[18px] px-[2px] pt-px flex flex-col">
    <button aria-label="向上滚动" class="h-[14px] bg-[#e9e9e9] border border-[#a5a5a5] flex items-center justify-center"><svg class="w-[7px] h-[4px] rotate-180 text-[#666]"><use href="#caret"/></svg></button>
    <div class="flex-1 bg-[#c9c9c9] flex flex-col"><div class="grow-[124]"></div><div class="grow-[227] bg-[#e9e9e9] border border-[#a5a5a5]"></div><div class="grow-[62]"></div></div>
    <button aria-label="向下滚动" class="h-[14px] bg-[#e9e9e9] border border-[#a5a5a5] flex items-center justify-center"><svg class="w-[7px] h-[4px] text-[#666]"><use href="#caret"/></svg></button>
  </div>
  <!-- Highlighted mouse pointer -->
  <div class="absolute left-[385px] top-[136px] size-[54px] rounded-full bg-[#e8e80e]"><svg class="absolute left-[27px] top-[27px] w-3 h-[19px]" viewBox="0 0 12 19"><path d="M.7 1v14l3.300-3 2.500 5.500 2.500-1-2.400-5.500H11z" fill="#eee" stroke="#222"/></svg></div>
</main>

<!-- Sheet tabs -->
<nav aria-label="工作表" class="shrink-0 h-[26px] flex items-start border-t border-[#8c8c8c] text-[12px] leading-[16px] text-[#444]">
  <div class="w-[94px] h-[22px] flex items-center text-[#b5b5b5]"><button aria-label="上一个" class="ml-[26px]"><svg class="w-[3px] h-[6px]" viewBox="0 0 3 6" fill="currentColor"><path d="M3 0v6L0 3z"/></svg></button><button aria-label="下一个" class="ml-[23px]"><svg class="w-[3px] h-[6px]" viewBox="0 0 3 6" fill="currentColor"><path d="M0 0v6l3-3z"/></svg></button></div>
  <button class="h-[22px] w-[48px] border-x border-[#9a9a9a]">图片</button>
  <button class="h-[22px] w-[172px] border-r border-[#9a9a9a]">44-Excel中返回错误值处理</button>
  <button class="h-[22px] w-[172px]">45-Excel中锁定任意行和列</button>
  <button class="-mt-px h-[24px] pt-px w-[185px] bg-[#e9ebe9] border-x border-x-[#8c8c8c] border-b-2 border-b-[#2c744b] text-[#2c744b]">46-Excel中输入上下标与公差</button>
  <button aria-label="新工作表" class="ml-[31px] mt-1"><svg class="w-[15px] h-[15px]" viewBox="0 0 15 15" fill="none" stroke="#777"><circle cx="7.500" cy="7.500" r="6.800"/><path d="M4 7.500h7M7.500 4v7" stroke-width="1.500"/></svg></button>
  <div class="ml-auto mr-4 mt-[5px] flex h-[15px]">
    <svg class="mr-[13px] mt-[2px] w-[2px] h-[11px]" viewBox="0 0 2 11" fill="#aaa"><path d="M0 0h2v2H0zM0 4h2v2H0zM0 8h2v2H0z"/></svg>
    <button aria-label="向左滚动" class="w-[14px] bg-[#e9e9e9] border border-[#a5a5a5] flex items-center justify-center"><svg class="w-1 h-[7px]" viewBox="0 0 4 7" fill="#555"><path d="M4 0v7L0 3.500z"/></svg></button>
    <div class="w-[405px] bg-[#e9e9e9] border border-[#a5a5a5]"></div>
    <div class="w-[47px] bg-[#c9c9c9]"></div>
    <button aria-label="向右滚动" class="w-[14px] bg-[#e9e9e9] border border-[#a5a5a5] flex items-center justify-center"><svg class="w-1 h-[7px]" viewBox="0 0 4 7" fill="#555"><path d="M0 0v7l4-3.500z"/></svg></button>
  </div>
</nav>

<!-- Status bar -->
<footer class="shrink-0 h-[21px] flex items-center bg-[#e0e0e0] border-t border-[#c4c4c4]">
  <span class="ml-[7px]">就绪</span>
  <button aria-label="宏录制" class="ml-[19px]"><svg class="w-3 h-3" viewBox="0 0 12 12" fill="none" stroke="#666"><path d="M.5 4.500h11v7H.5zM5 2.500h7M3 7v3M6 6v4M9 7v3M5 .8h7"/><circle cx="2" cy="2" r="2" fill="#444" stroke="none"/></svg></button>
  <button aria-label="普通" class="ml-auto w-9 h-full bg-[#bcbcbc] flex items-center justify-center"><svg class="w-[13px] h-[13px]" viewBox="0 0 13 13" fill="none" stroke="#666"><path d="M.5.5h12v12H.5zM4.500.5v12M8.500.5v12M.5 4.500h12M.5 8.500h12"/></svg></button>
  <button aria-label="页面布局" class="w-9 flex justify-center"><svg class="w-[13px] h-[13px]" viewBox="0 0 13 13" fill="none" stroke="#666"><path d="M.5.5h12v12H.5zM3.500 2.500h6v8h-6zM5 4.500h3M5 6.500h3M5 8.500h3"/></svg></button>
  <button aria-label="分页预览" class="w-9 flex justify-center"><svg class="w-[13px] h-[13px]" viewBox="0 0 13 13" fill="none" stroke="#666"><path d="M.5.5h12v12H.5zM4.500.5v7h4v-7M8.500 7.500V.5"/></svg></button>
  <button aria-label="缩小" class="ml-1 w-[6px] h-[2px] bg-[#555]"></button>
  <input type="range" aria-label="缩放" min="0" max="100" value="65" class="ml-[5px] w-[90px] h-3 appearance-none bg-transparent [&::-webkit-slider-runnable-track]:h-px [&::-webkit-slider-runnable-track]:bg-[#9a9a9a] [&::-webkit-slider-thumb]:appearance-none [&::-webkit-slider-thumb]:w-[5px] [&::-webkit-slider-thumb]:h-[11px] [&::-webkit-slider-thumb]:-mt-[5px] [&::-webkit-slider-thumb]:bg-[#555]">
  <button aria-label="放大" class="ml-[5px]"><svg class="w-[7px] h-[7px]" viewBox="0 0 7 7" stroke="#555" stroke-width="1.500"><path d="M0 3.500h7M3.500 0v7"/></svg></button>
  <button class="ml-[11px] mr-[5px] text-[12px]">175%</button>
</footer>
</body>
</html>
